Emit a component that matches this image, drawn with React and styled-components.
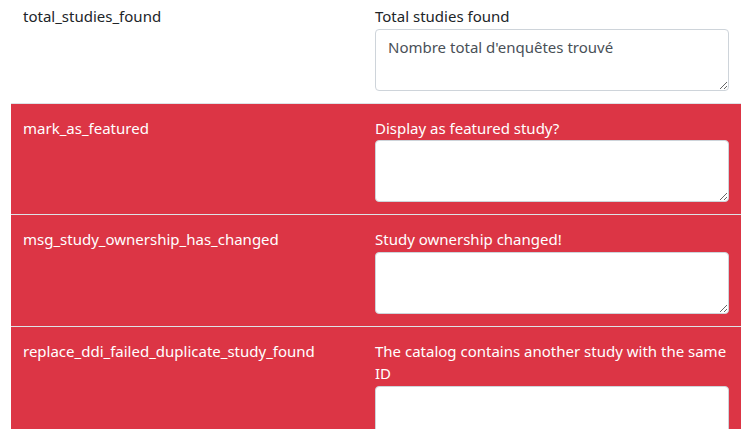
import React from "react";
import styled, { createGlobalStyle } from "styled-components";

const Global = createGlobalStyle`
  html, body { margin: 0; padding: 0; background: #fff; }
  body {
    font-family: "Segoe UI", "Noto Sans", "Open Sans", sans-serif;
    font-size: 15px;
    line-height: 1.5;
    color: #212529;
    overflow: hidden;
  }
`;

const Table = styled.div`
  margin: -9px 11px 0;
  display: flex;
  flex-direction: column;
`;

const Row = styled.div`
  display: grid;
  grid-template-columns: 352px 1fr;
  border-top: 1px solid #dee2e6;
  background: ${(p) => (p.$danger ? "#dc3545" : "#fff")};
  color: ${(p) => (p.$danger ? "#fff" : "#212529")};
`;

const KeyCell = styled.div`
  padding: 13px 12px 12px 12px;
`;

const ValueCell = styled.div`
  padding: 13px 12px 12px;
  display: flex;
  flex-direction: column;
`;

const Label = styled.label`
  display: block;
  margin-bottom: 1px;
`;

const TextArea = styled.textarea`
  display: block;
  box-sizing: border-box;
  width: 100%;
  height: 62px;
  padding: 6px 12px;
  font-family: inherit;
  font-size: 15px;
  line-height: 1.5;
  color: #495057;
  background: #fff;
  border: 1px solid #ced4da;
  border-radius: 4px;
  outline: none;
  margin: 0;
`;

const rows = [
  { key: "total_studies_found", label: "Total studies found", value: "Nombre total d'enquêtes trouvé", danger: false },
  { key: "mark_as_featured", label: "Display as featured study?", value: "", danger: true },
  { key: "msg_study_ownership_has_changed", label: "Study ownership changed!", value: "", danger: true },
  { key: "replace_ddi_failed_duplicate_study_found", label: "The catalog contains another study with the same ID", value: "", danger: true },
];

export default function App() {
  return (
    <>
      <Global />
      <Table>
        {rows.map((r) => (
          <Row key={r.key} $danger={r.danger}>
            <KeyCell>{r.key}</KeyCell>
            <ValueCell>
              <Label>{r.label}</Label>
              <TextArea defaultValue={r.value} />
            </ValueCell>
          </Row>
        ))}
      </Table>
    </>
  );
}
